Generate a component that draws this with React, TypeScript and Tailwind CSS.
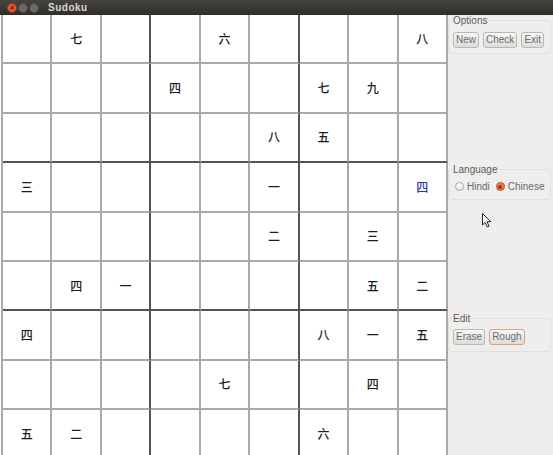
import React from 'react';

const board: string[][] = [
  ['', '七', '', '', '六', '', '', '', '八'],
  ['', '', '', '四', '', '', '七', '九', ''],
  ['', '', '', '', '', '八', '五', '', ''],
  ['三', '', '', '', '', '一', '', '', '四'],
  ['', '', '', '', '', '二', '', '三', ''],
  ['', '四', '一', '', '', '', '', '五', '二'],
  ['四', '', '', '', '', '', '八', '一', '五'],
  ['', '', '', '', '七', '', '', '四', ''],
  ['五', '二', '', '', '', '', '六', '', ''],
];

function Cell({ value, r, c }: { value: string; r: number; c: number }) {
  const right = c === 2 || c === 5 ? 'border-r-[#545454]' : 'border-r-[#a9a9a9]';
  const bottom = r === 2 || r === 5 ? 'border-b-[#545454]' : 'border-b-[#a9a9a9]';
  const color = r === 3 && c === 8 ? 'text-[#3535a8]' : 'text-[#1c1c1c]';
  return (
    <div
      className={`h-[49.4px] border-r-2 border-b-2 ${right} ${bottom} flex items-center justify-center text-[12px] font-medium ${color}`}
      style={{ fontFamily: '"Noto Sans CJK SC", "Noto Sans CJK JP", sans-serif' }}
    >
      {value}
    </div>
  );
}

function GtkButton({ label, active }: { label: string; active?: boolean }) {
  return (
    <button
      className={`h-[16px] px-[2px] rounded-[3px] border text-[10px] leading-none text-[#6a6a6a] bg-gradient-to-b from-[#f7f7f6] to-[#dddcd9] ${
        active ? 'border-[#ec9a72]' : 'border-[#b9b8b4]'
      }`}
    >
      {label}
    </button>
  );
}

function Group({ title, children, className }: { title: string; children: React.ReactNode; className?: string }) {
  return (
    <fieldset className={`border border-[#e2e0db] rounded-[3px] mr-[2px] pl-[4px] pb-[5px] ${className ?? ''}`}>
      <legend className="text-[10px] leading-[11px] text-[#5a5a5a] px-[1px] -ml-[1px]">{title}</legend>
      {children}
    </fieldset>
  );
}

export default function App() {
  return (
    <div
      className="w-[553px] h-[455px] overflow-hidden flex flex-col bg-white"
      style={{ fontFamily: '"Liberation Sans", Arial, sans-serif' }}
    >
      {/* Title bar */}
      <div className="h-[15px] shrink-0 flex items-center bg-gradient-to-b from-[#46453f] to-[#2e2d29]">
        <div className="flex items-center gap-[1px] ml-[7px]">
          <span className="w-[10px] h-[10px] rounded-full bg-[#e4582a] border border-[#a83b17] flex items-center justify-center text-[7px] leading-none font-bold text-[#3a1a0c]">
            ×
          </span>
          <span className="w-[10px] h-[10px] rounded-full bg-[#6a6964] border border-[#4a4944]" />
          <span className="w-[10px] h-[10px] rounded-full bg-[#6a6964] border border-[#4a4944]" />
        </div>
        <span className="ml-[9px] text-[10px] font-bold tracking-[0.5px] text-[#dcd8ce]">Sudoku</span>
      </div>

      <div className="flex flex-1 min-h-0">
        {/* Board */}
        <div className="w-[448px] shrink-0 pl-[1px] bg-white">
          <div className="grid grid-cols-9 w-[447px] border-l-2 border-l-[#a9a9a9] bg-white">
            {board.map((row, r) =>
              row.map((v, c) => <Cell key={`${r}-${c}`} value={v} r={r} c={c} />)
            )}
          </div>
        </div>

        {/* Side panel */}
        <div className="flex-1 bg-[#efeeec] flex flex-col relative">
          <Group title="Options" className="pt-[6px]">
            <div className="flex gap-[4px]">
              <GtkButton label="New" />
              <GtkButton label="Check" />
              <GtkButton label="Exit" />
            </div>
          </Group>

          <Group title="Language" className="mt-[110px] pt-[4px]">
            <div className="flex items-center text-[10px] text-[#6a6a6a]">
              <span className="w-[9px] h-[9px] rounded-full border border-[#a8a7a3] bg-gradient-to-b from-[#ffffff] to-[#e9e8e5] ml-[2px]" />
              <span className="ml-[3px]">Hindi</span>
              <span className="w-[9px] h-[9px] rounded-full border border-[#c0532a] bg-[#ef7b4c] ml-[6px] flex items-center justify-center">
                <span className="w-[4px] h-[4px] rounded-full bg-[#a5380f]" />
              </span>
              <span className="ml-[3px]">Chinese</span>
            </div>
          </Group>

          <Group title="Edit" className="mt-[113px] pt-[5px]">
            <div className="flex gap-[4px]">
              <div className="h-[17px] flex">
                <GtkButton label="Erase" />
              </div>
              <GtkButton label="Rough" active />
            </div>
          </Group>

          {/* Mouse pointer */}
          <svg className="absolute left-[34px] top-[198px]" width="10" height="15" viewBox="0 0 10 15">
            <path d="M0.5 0.5 L0.5 12 L3.2 9.4 L5.2 14 L7 13.2 L5 8.7 L8.8 8.7 Z" fill="#ffffff" stroke="#222" strokeWidth="1" strokeLinejoin="round" />
          </svg>
        </div>
      </div>
    </div>
  );
}
